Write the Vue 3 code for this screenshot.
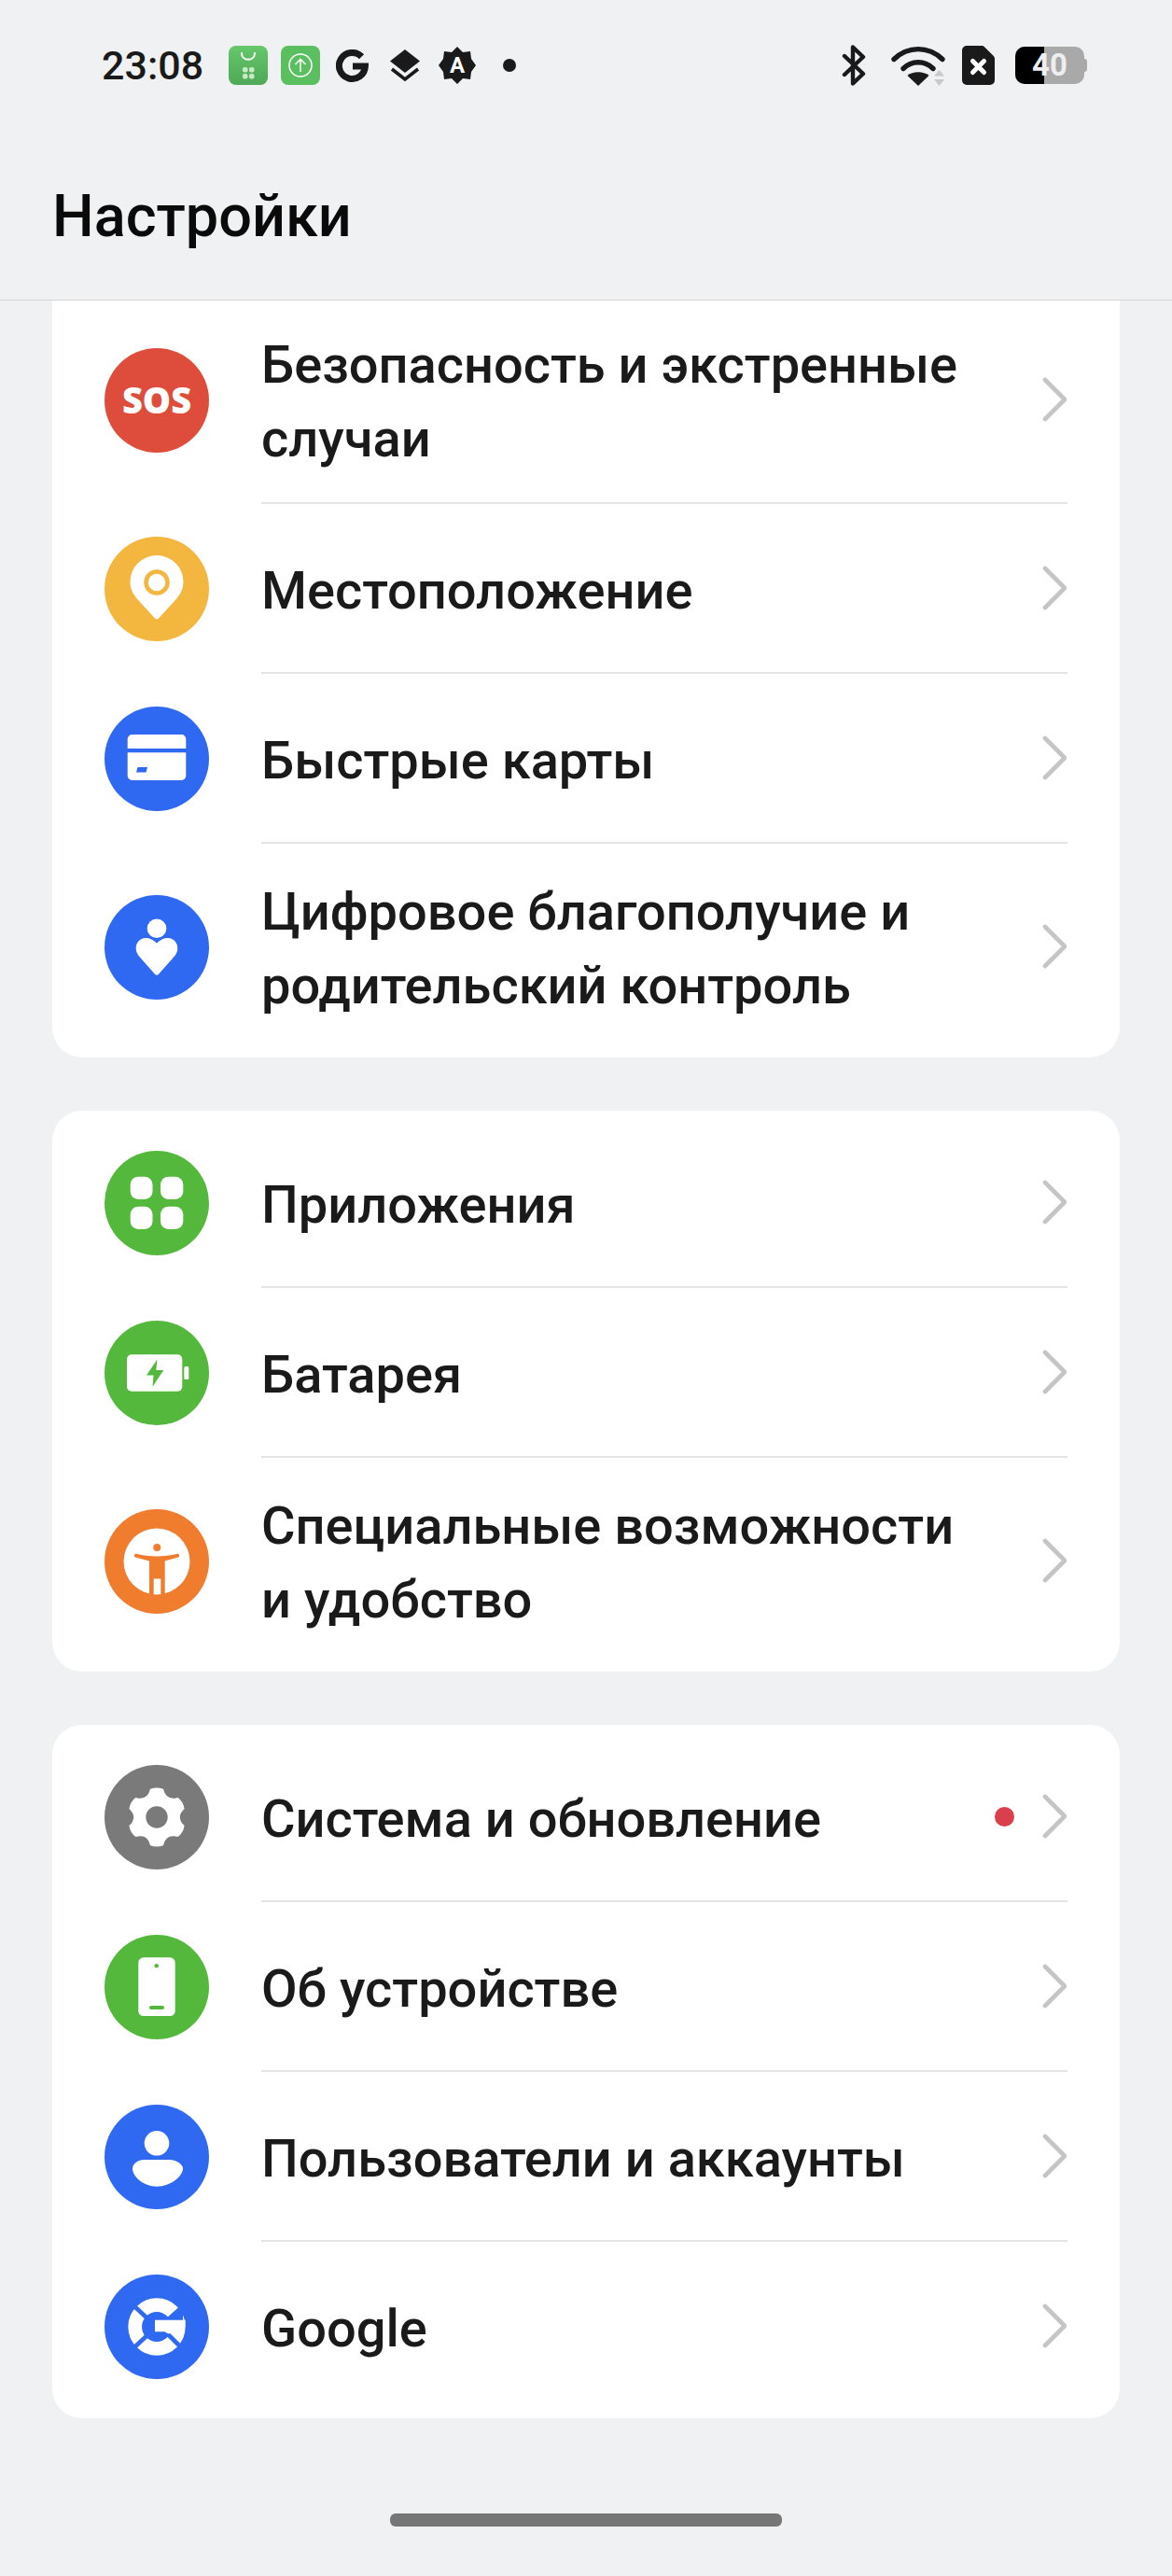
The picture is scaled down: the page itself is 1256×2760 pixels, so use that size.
<template>
  <div class="screen">
    <header class="header">
      <div class="status">
        <span class="time">23:08</span>
        <svg class="st-app" width="42" height="42" viewBox="0 0 42 42">
          <defs>
            <linearGradient id="shop" x1="0" y1="0" x2="0" y2="1">
              <stop offset="0" stop-color="#66c76b" />
              <stop offset="1" stop-color="#4fa856" />
            </linearGradient>
          </defs>
          <rect width="42" height="42" rx="8" fill="url(#shop)" />
          <path d="M14 8c0 9 14 9 14 0" fill="none" stroke="#fff" stroke-width="2" stroke-linecap="round" />
          <g fill="#c6ebc4">
            <rect x="15" y="23" width="5.5" height="5.5" rx="2" />
            <rect x="22" y="23" width="5.5" height="5.5" rx="2" />
            <rect x="15" y="30" width="5.5" height="5.5" rx="2" />
            <rect x="22" y="30" width="5.5" height="5.5" rx="2" />
          </g>
        </svg>
        <svg class="st-app2" width="42" height="42" viewBox="0 0 42 42">
          <rect width="42" height="42" rx="8" fill="#5ac05f" />
          <circle cx="21" cy="21" r="12" fill="none" stroke="#fff" stroke-width="1.6" />
          <path d="M21 28V14.5M15.5 20l5.5-5.5 5.5 5.5" fill="none" stroke="#fff" stroke-width="1.6" />
        </svg>
        <svg class="st-g" width="35" height="35" viewBox="0 0 35 35">
          <path d="M27.5 7.7A14 14 0 1 0 31.4 18H18" fill="none" stroke="#1a1a1a" stroke-width="7" />
        </svg>
        <svg class="st-layers" width="32" height="35" viewBox="0 0 32 35">
          <path d="M16 0 32 12.5 16 25 0 12.5z" fill="#1a1a1a" />
          <path d="M2 21 16 32 30 21" fill="none" stroke="#1a1a1a" stroke-width="3.6" />
        </svg>
        <div class="st-badge">
          <svg width="40" height="40" viewBox="0 0 40 40">
            <path d="M20 0l6 6 8-1 1 8 5 7-5 7-1 8-8-1-6 6-6-6-8 1-1-8-5-7 5-7 1-8 8 1z" fill="#1a1a1a" />
          </svg>
          <span>A</span>
        </div>
        <span class="st-dot"></span>
        <span class="spacer"></span>
        <svg class="st-bt" width="26" height="44" viewBox="0 0 26 44">
          <path d="M3 12 23 31 12 41.5V2.5L23 13 3 32" fill="none" stroke="#1a1a1a" stroke-width="4.4" stroke-linejoin="round" stroke-linecap="round" />
        </svg>
        <svg class="st-wifi" width="60" height="44" viewBox="0 0 60 44">
          <path d="M4 15.500C19 1 41 1 56 15.500" fill="none" stroke="#1a1a1a" stroke-width="5.400" stroke-linecap="round" />
          <path d="M14 25.500C23 16.500 37 16.500 46 25.500" fill="none" stroke="#1a1a1a" stroke-width="5.400" stroke-linecap="round" />
          <path d="M18.500 33C24 28 36 28 41.500 33L30 44z" fill="#1a1a1a" />
          <path d="M47 33.500 52.500 27 58 33.500zM47 37h11l-5.500 7z" fill="#c9c9c9" />
        </svg>
        <svg class="st-sim" width="35" height="42" viewBox="0 0 35 42">
          <path d="M5 0h16a4 4 0 0 1 3 1.200L33.800 11a4 4 0 0 1 1.200 3v23a5 5 0 0 1-5 5H5a5 5 0 0 1-5-5V5a5 5 0 0 1 5-5z" fill="#1a1a1a" />
          <path d="M11.500 16.500 23.500 28.500M23.500 16.500 11.500 28.500" stroke="#fff" stroke-width="5" stroke-linecap="round" />
        </svg>
        <div class="st-battery">
          <span class="level"></span>
          <span class="nub"></span>
          <span class="num">40</span>
        </div>
      </div>
      <h1 class="title">Настройки</h1>
    </header>

    <main class="list">
      <section v-for="(group, g) in groups" :key="g" class="card">
        <div v-for="(row, i) in group" :key="row.label" class="row">
          <svg class="icon" width="112" height="112" viewBox="0 0 112 112">
            <circle cx="56" cy="56" r="56" :fill="row.color" />
            <text v-if="row.icon === 'sos'" x="56" y="70" text-anchor="middle" class="sos">SOS</text>
            <template v-else-if="row.icon === 'pin'">
              <path d="M56 20a28.500 28.500 0 0 1 28.500 28.500c0 9-4.500 15-10 21L58 87.500a3 3 0 0 1-4 0L37.500 69.500c-5.500-6-10-12-10-21A28.500 28.500 0 0 1 56 20z" fill="#fff" />
              <circle cx="56" cy="49" r="11.500" fill="none" :stroke="row.color" stroke-width="4.600" />
            </template>
            <template v-else-if="row.icon === 'card'">
              <path d="M29.500 30h53a4.800 4.800 0 0 1 4.800 4.800V45H24.700V34.800a4.800 4.800 0 0 1 4.800-4.800zM24.700 49.300h62.600v24.900a4.800 4.800 0 0 1-4.800 4.800h-53a4.800 4.800 0 0 1-4.800-4.800z" fill="#fff" />
              <path d="M35.500 65H46l-1.500 5.500H34z" :fill="row.color" />
            </template>
            <template v-else-if="row.icon === 'care'">
              <circle cx="56" cy="35.700" r="10.300" fill="#fff" />
              <path d="M56 51.500C52.500 48 48.500 46 44 46c-6 0-10.300 5-10.300 11 0 4 2 7.500 4.800 10.300L54 84.800c1.200 1.400 2.800 1.400 4 0l15.500-17.500c2.800-2.800 4.800-6.300 4.800-10.300 0-6-4.300-11-10.300-11-4.500 0-8.500 2-12 5.500z" fill="#fff" />
            </template>
            <g v-else-if="row.icon === 'apps'" fill="#fff">
              <rect x="27.700" y="27.700" width="23.800" height="24.300" rx="8.500" />
              <rect x="60" y="27.700" width="24.300" height="24.300" rx="8.500" />
              <rect x="27.700" y="59.700" width="23.800" height="24.300" rx="8.500" />
              <rect x="60" y="59.700" width="24.300" height="24.300" rx="8.500" />
            </g>
            <template v-else-if="row.icon === 'battery'">
              <rect x="24" y="36.300" width="59.300" height="39.400" rx="5" fill="#fff" />
              <rect x="85.300" y="49" width="5" height="14" rx="1.500" fill="#fff" />
              <path d="M56.500 41.500 45 58.500h7.500l-1 12.200L63.300 53h-8z" :fill="row.color" />
            </template>
            <template v-else-if="row.icon === 'access'">
              <circle cx="56" cy="56" r="35.500" fill="#fff" />
              <circle cx="56.300" cy="41" r="4" :fill="row.color" />
              <path d="M34 47.800C41 49.800 48 50.500 56 50.500s15-.7 22-2.700a2 2 0 0 1 1 3.800L64.700 55.500V92H60.300V74.500H52.700V92H48V55.500L33 51.600a2 2 0 0 1 1-3.800z" :fill="row.color" />
            </template>
            <template v-else-if="row.icon === 'gear'">
              <path :d="gearPath" fill="#fff" />
              <circle cx="56" cy="56" r="11.700" :fill="row.color" />
            </template>
            <template v-else-if="row.icon === 'phone'">
              <rect x="36.300" y="24.300" width="39.400" height="62.700" rx="5.500" fill="#fff" />
              <circle cx="55.700" cy="33.300" r="2.200" :fill="row.color" />
              <rect x="48" y="76" width="16" height="4" rx="2" :fill="row.color" />
            </template>
            <template v-else-if="row.icon === 'user'">
              <circle cx="56" cy="41.300" r="13.300" fill="#fff" />
              <path d="M43 59h26c8 0 15 5 15 9.500 0 8-13 19.200-28 19.200S30 76.500 30 68.500C30 64 35 59 43 59z" fill="#fff" />
            </template>
            <template v-else-if="row.icon === 'google'">
              <circle cx="56" cy="56" r="23.300" fill="none" stroke="#fff" stroke-width="14.700" />
              <path d="M56 56 84 31V49H56z" :fill="row.color" />
              <path d="M31 33 47 48M31 79 47 64M67 63 81 77" :stroke="row.color" stroke-width="4.600" fill="none" />
              <path d="M54 48.700h32.700c.3 5-.7 10-2.700 14.500H68l-3.500-2H54z" fill="#fff" />
            </template>
          </svg>
          <div class="body" :class="{ last: i === group.length - 1 }">
            <span class="label">{{ row.label }}</span>
            <span v-if="row.dot" class="badge"></span>
            <svg class="chevron" width="26" height="48" viewBox="0 0 26 48">
              <path d="M3 3 24 24 3 45" fill="none" stroke="#c5c5c5" stroke-width="4.600" stroke-linecap="round" stroke-linejoin="round" />
            </svg>
          </div>
        </div>
      </section>
    </main>

    <footer class="nav">
      <span class="home-bar"></span>
    </footer>
  </div>
</template>

<script setup>
const BLUE = '#2f69f2'
const GREEN = '#54b83c'

const groups = [
  [
    { label: 'Безопасность и экстренные случаи', icon: 'sos', color: '#de4d3c' },
    { label: 'Местоположение', icon: 'pin', color: '#f3b63e' },
    { label: 'Быстрые карты', icon: 'card', color: BLUE },
    { label: 'Цифровое благополучие и родительский контроль', icon: 'care', color: BLUE }
  ],
  [
    { label: 'Приложения', icon: 'apps', color: GREEN },
    { label: 'Батарея', icon: 'battery', color: GREEN },
    { label: 'Специальные возможности и удобство', icon: 'access', color: '#f07c2e' }
  ],
  [
    { label: 'Система и обновление', icon: 'gear', color: '#7a7a7a', dot: true },
    { label: 'Об устройстве', icon: 'phone', color: GREEN },
    { label: 'Пользователи и аккаунты', icon: 'user', color: BLUE },
    { label: 'Google', icon: 'google', color: BLUE }
  ]
]

// шесть зубцов шестерёнки вокруг центра иконки
const point = (deg, r) => {
  const a = (deg - 90) * Math.PI / 180
  return `${(56 + r * Math.cos(a)).toFixed(1)} ${(56 + r * Math.sin(a)).toFixed(1)}`
}

let gearPath = `M${point(-13, 31)}`
for (let k = 0; k < 6; k++) {
  const a = k * 60
  gearPath += `Q${point(a, 33)} ${point(a + 13, 31)}Q${point(a + 30, 20)} ${point(a + 47, 31)}`
}
gearPath += 'Z'
</script>

<style>
html,
body {
  background: #f0f1f3;
}
</style>

<style scoped>
.screen {
  width: 1256px;
  height: 2760px;
  display: flex;
  flex-direction: column;
  overflow: hidden;
  background: #f0f1f3;
  color: #1a1a1a;
  font-family: Roboto, "Noto Sans", sans-serif;
}

.header {
  flex: none;
  height: 321px;
  border-bottom: 1px solid #d6d6d8;
}

.status {
  height: 140px;
  padding: 0 91px 0 109px;
  display: flex;
  align-items: center;
}

.time {
  font-size: 43px;
  font-weight: 500;
  width: 136px;
}

.st-app2 {
  margin-left: 14px;
}

.st-g {
  margin-left: 17px;
}

.st-layers {
  margin-left: 23px;
}

.st-badge {
  position: relative;
  width: 40px;
  height: 40px;
  margin-left: 20px;
}

.st-badge span {
  position: absolute;
  inset: 0;
  text-align: center;
  color: #fff;
  font-size: 24px;
  font-weight: 700;
  line-height: 40px;
}

.st-dot {
  width: 14px;
  height: 14px;
  margin-left: 29px;
  border-radius: 50%;
  background: #1a1a1a;
}

.spacer {
  flex: 1;
}

.st-wifi {
  margin-left: 26px;
}

.st-sim {
  margin-left: 17px;
}

.st-battery {
  position: relative;
  width: 74px;
  height: 40px;
  margin-left: 22px;
  margin-right: 3px;
  border-radius: 10px;
  background: #a9a9a9;
}

.level {
  position: absolute;
  left: 0;
  top: 0;
  bottom: 0;
  width: 31px;
  border-radius: 10px 0 0 10px;
  background: #000;
}

.nub {
  position: absolute;
  right: -3px;
  top: 13px;
  width: 3px;
  height: 14px;
  border-radius: 0 3px 3px 0;
  background: #a9a9a9;
}

.num {
  position: absolute;
  left: 18px;
  top: 0;
  color: #eee;
  font-size: 33px;
  font-weight: 700;
  line-height: 40px;
}

.title {
  margin: 0;
  padding-left: 56px;
  color: #0a0a0a;
  font-size: 63px;
  font-weight: 500;
  line-height: 184px;
}

.list {
  flex: 1;
  min-height: 0;
  padding: 0 56px;
  display: flex;
  flex-direction: column;
  gap: 57px;
  overflow: hidden;
}

.card {
  flex: none;
  padding: 8px 0 7px;
  border-radius: 32px;
  background: #fff;
}

.card:first-child {
  margin-top: -12px;
  border-radius: 0 0 32px 32px;
}

.row {
  display: flex;
  align-items: center;
  padding-left: 56px;
}

.icon {
  flex: none;
}

.body {
  flex: 1;
  min-height: 182px;
  margin-left: 56px;
  margin-right: 56px;
  display: flex;
  align-items: center;
  border-bottom: 2px solid #e4e4e4;
  box-sizing: border-box;
}

.body.last {
  border-bottom-color: transparent;
}

.label {
  flex: 1;
  max-width: 770px;
  padding: 34px 0 28px;
  font-size: 56px;
  font-weight: 500;
  line-height: 79px;
}

.badge {
  width: 21px;
  height: 21px;
  margin-left: auto;
  margin-right: 30px;
  border-radius: 50%;
  background: #d9404c;
}

.chevron {
  flex: none;
  margin-left: auto;
  margin-right: 1px;
}

.badge + .chevron {
  margin-left: 0;
}

.sos {
  fill: #fff;
  font-family: "Open Sans", sans-serif;
  font-size: 38px;
  font-weight: 800;
}

.nav {
  flex: none;
  height: 90px;
  display: flex;
  justify-content: center;
  padding-top: 23px;
  box-sizing: border-box;
}

.home-bar {
  width: 420px;
  height: 14px;
  border-radius: 6px;
  background: #767676;
}
</style>
